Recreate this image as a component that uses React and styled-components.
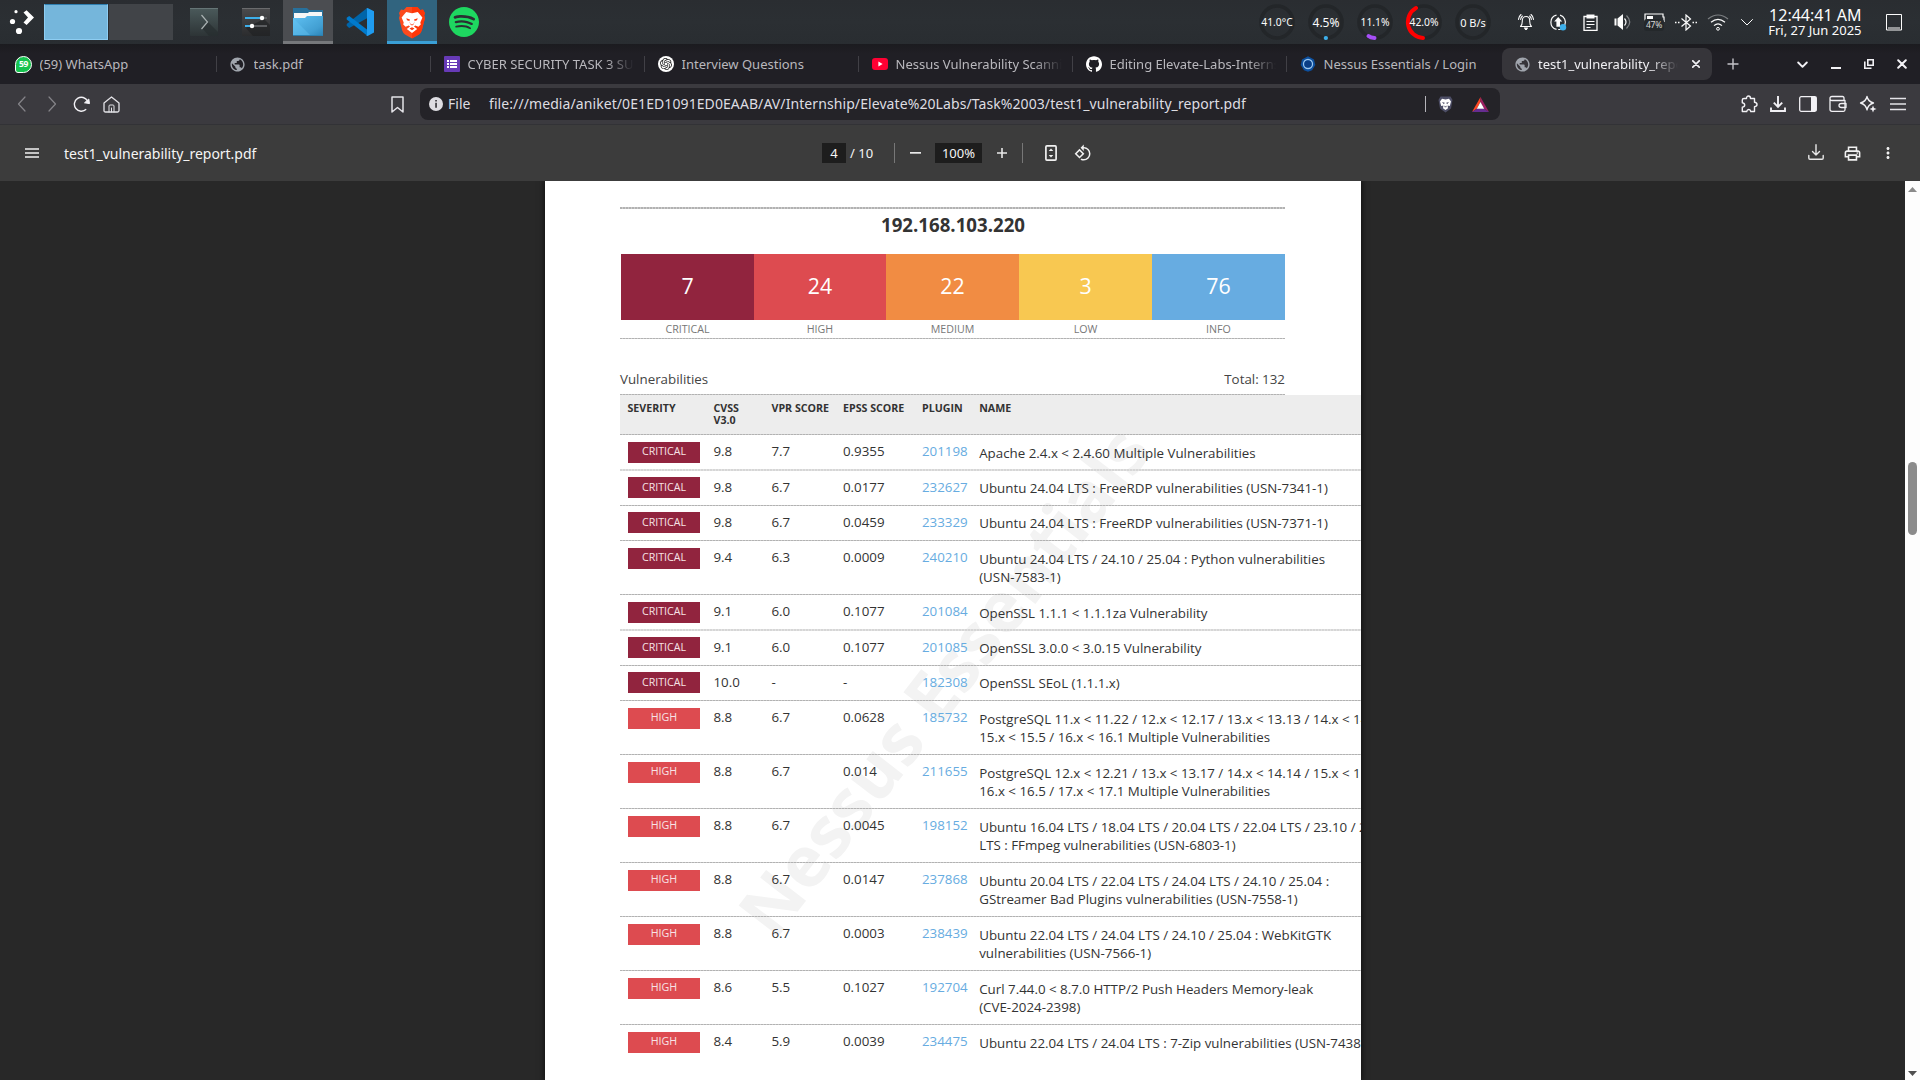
import React from 'react';
import styled, { createGlobalStyle, css } from 'styled-components';
import { SiSpotify, SiOpenai, SiGithub } from 'react-icons/si';
import {
  MdPublic,
  MdOutlinePrint,
  MdMoreVert,
  MdRotate90DegreesCcw,
} from 'react-icons/md';

const ui = '"Noto Sans", "Open Sans", sans-serif';
const doc = '"Open Sans", "Noto Sans", sans-serif';

const Global = createGlobalStyle`
  * { box-sizing: border-box; }
  html, body { margin: 0; padding: 0; background: #282828; }
  body { width: 1920px; height: 1080px; overflow: hidden; font-family: ${ui}; }
  svg { display: block; flex: none; }
`;

const Screen = styled.div`
  width: 1920px;
  height: 1080px;
  display: flex;
  flex-direction: column;
  overflow: hidden;
`;

/* ---------- desktop panel ---------- */

const Panel = styled.header`
  height: 44px;
  flex: none;
  display: flex;
  align-items: center;
  justify-content: space-between;
  padding: 0 10px 0 0;
  background: linear-gradient(#2a2d31, #2b2f33 50%, #292d31);
  color: #fcfcfc;
`;

const PanelGroup = styled.div`
  display: flex;
  align-items: center;
  height: 44px;
`;

const Launcher = styled.div`
  width: 44px;
  display: flex;
  justify-content: center;
`;

const Pager = styled.div`
  display: flex;
  gap: 1px;
  margin-right: 6px;
`;

const Desktop = styled.div`
  width: 64px;
  height: 36px;
  background: ${(p) => (p.$active ? '#75b6db' : '#414448')};
  ${(p) =>
    p.$active &&
    css`
      border: 1px solid #8dcdf2;
      border-top-color: #2f7fb0;
    `}
`;

const Tasks = styled.div`
  display: flex;
  gap: 2px;
`;

const Task = styled.div`
  width: 50px;
  height: 44px;
  display: flex;
  align-items: center;
  justify-content: center;
  background: ${(p) => p.$bg || 'transparent'};
  border-bottom: 3px solid ${(p) => p.$line || 'transparent'};
  padding-top: 3px;
`;

const Gauge = styled.div`
  width: 49px;
  height: 44px;
  display: grid;
  place-items: center;
  font-size: ${(p) => p.$size}px;
  white-space: nowrap;

  > * {
    grid-area: 1 / 1;
  }
`;

const TrayCell = styled.div`
  width: ${(p) => p.$w || 32}px;
  height: 44px;
  display: flex;
  align-items: center;
  justify-content: center;
`;

const Clock = styled.div`
  width: 102px;
  display: flex;
  flex-direction: column;
  align-items: flex-end;
  font-size: 16px;
  line-height: 17px;
  white-space: nowrap;
  margin: 0 16.5px 0 -0.5px;
`;

const DateLine = styled.span`
  font-size: 13px;
  line-height: 13px;
`;

/* ---------- tabs ---------- */

const TabStrip = styled.nav`
  height: 40px;
  flex: none;
  display: flex;
  align-items: center;
  padding-left: 3px;
  background: linear-gradient(#1b1b1f, #201f25 10px);
`;

const Tab = styled.div`
  width: 214px;
  flex: none;
  height: 40px;
  display: flex;
  align-items: center;
  padding-left: 12px;
  gap: 7.5px;
  font-size: 13px;
  color: #b9b8bd;

  &::after {
    content: '';
    width: 1px;
    height: 16px;
    margin-left: auto;
    background: ${(p) => (p.$last ? 'transparent' : '#414046')};
    flex: none;
  }
`;

const ActiveTab = styled.div`
  width: 210px;
  height: 32px;
  margin-left: 1px;
  border-radius: 8px;
  background: #36353a;
  display: flex;
  align-items: center;
  padding: 0 10px 0 12px;
  gap: 7px;
  font-size: 13px;
  color: #f0eff3;
`;

const TabLabel = styled.span`
  white-space: nowrap;
  overflow: hidden;
  width: ${(p) => p.$w || 166}px;
  line-height: 20px;
  padding-bottom: 1px;
  flex: none;
  ${(p) =>
    p.$fade &&
    css`
      mask-image: linear-gradient(90deg, #000 calc(100% - 28px), transparent);
    `}
`;

const TabIcon = styled.span`
  width: 17px;
  height: 16px;
  display: flex;
  align-items: center;
  justify-content: center;
  flex: none;
`;

const TabClose = styled.span`
  margin-left: 7px;
`;

const WindowButtons = styled.div`
  display: flex;
  align-items: center;
  margin-left: auto;
`;

const WindowButton = styled.div`
  width: ${(p) => p.$w || 33}px;
  height: 40px;
  display: flex;
  align-items: center;
  justify-content: center;
`;

const NewTab = styled.div`
  width: 42px;
  display: flex;
  justify-content: center;
`;

/* ---------- address bar ---------- */

const NavBar = styled.div`
  height: 41px;
  flex: none;
  display: flex;
  align-items: center;
  background: #3b3a3f;
  border-bottom: 1px solid #323236;
  padding: 0 7px 0 7px;
`;

const NavCell = styled.div`
  width: ${(p) => p.$w || 30}px;
  display: flex;
  align-items: center;
  justify-content: center;
  flex: none;
`;

const Spacer = styled.div`
  width: ${(p) => p.$w}px;
  flex: none;
`;

const AddressBar = styled.div`
  width: 1080px;
  height: 32px;
  border-radius: 8px;
  background: #242328;
  display: flex;
  align-items: center;
  padding: 0 5px 0 9px;
  color: #dedde2;
  font-size: 14px;
`;

const Scheme = styled.span`
  width: 41px;
  margin-left: 5px;
  padding-bottom: 2px;
  color: #dedde2;
`;

const Url = styled.span`
  flex: 1;
  white-space: nowrap;
  padding-bottom: 2px;
  letter-spacing: 0.085px;
`;

const Divider = styled.span`
  width: 1px;
  height: ${(p) => p.$h}px;
  background: ${(p) => p.$color};
  flex: none;
`;

const NavRight = styled.div`
  display: flex;
  align-items: center;
  margin-left: auto;
`;

/* ---------- pdf toolbar ---------- */

const PdfBar = styled.div`
  height: 56px;
  flex: none;
  display: grid;
  grid-template-columns: 822px 300px 1fr;
  align-items: center;
  background: #3c3c3c;
  color: #f5f5f5;
  position: relative;
  z-index: 2;
`;

const PdfTitle = styled.div`
  display: flex;
  align-items: center;
  padding-left: 25px;
  gap: 25px;
  font-size: 14px;
  letter-spacing: -0.03px;
`;

const PdfControls = styled.div`
  display: flex;
  align-items: center;
  font-size: 13px;
  white-space: nowrap;

  > * {
    flex: none;
  }
`;

const Field = styled.span`
  width: ${(p) => p.$w}px;
  height: 20px;
  line-height: 20px;
  text-align: center;
  background: #1d1d1d;
`;

const PageTotal = styled.span`
  width: 48px;
  padding-left: 4px;
`;

const ControlCell = styled.span`
  width: ${(p) => p.$w}px;
  display: flex;
  justify-content: center;
`;

const PdfActions = styled.div`
  display: flex;
  justify-content: flex-end;
  padding-right: 14px;
`;

/* ---------- document ---------- */

const Viewer = styled.main`
  flex: 1;
  min-height: 0;
  display: flex;
  background: #282828;
`;

const Canvas = styled.div`
  width: 1905px;
  display: flex;
  padding-left: 545px;
`;

const Page = styled.article`
  width: 816px;
  height: 899px;
  background: #fff;
  box-shadow: 0 0 6px 1px rgba(0, 0, 0, 0.6);
  position: relative;
  overflow: hidden;
  padding: 26px 0 0 75px;
  font-family: ${doc};
  color: #333;
`;

const dotted = css`
  background-image: repeating-linear-gradient(90deg, #b2b2b2 0 2px, #cbcbcb 2px 3px);
`;

const Rule = styled.div`
  width: 665px;
  height: ${(p) => p.$h || 1}px;
  ${dotted}
`;

const Host = styled.h1`
  width: 666px;
  margin: 0;
  height: 45px;
  line-height: 32px;
  font-size: 18.67px;
  font-weight: 700;
  text-align: center;
  color: #333;
`;

const Tiles = styled.div`
  display: grid;
  grid-template-columns: 133px 132px 133px 133px 133px;
  width: 665px;
  padding-left: 1px;
`;

const Tile = styled.div`
  height: 66px;
  line-height: 63px;
  text-align: center;
  font-size: 21.33px;
  font-weight: 400;
  color: #fff;
  background: ${(p) => p.$bg};
`;

const TileLabel = styled.div`
  height: 18px;
  line-height: 18px;
  font-size: 10.67px;
  text-align: center;
  color: #777;
`;

const Caption = styled.div`
  width: 665px;
  height: 55px;
  padding-top: 31px;
  line-height: 18px;
  font-size: 13.33px;
  display: flex;
  justify-content: space-between;
  color: #444;
`;

const columns = css`
  display: grid;
  grid-template-columns: 86px 58px 71.5px 79px 57.2px 420px;
  padding-left: 7.5px;
  width: 780px;
`;

const HeadRow = styled.div`
  ${columns}
  height: 39px;
  padding-top: 7px;
  font-size: 10.67px;
  line-height: 12px;
  font-weight: 700;
  color: #333;
  background: #ededed;
  position: relative;
  z-index: 1;
`;

const Row = styled.div`
  ${columns}
  height: ${(p) => p.$h}px;
  position: relative;
  font-size: 13.33px;
  line-height: 18px;
  align-items: start;
  ${dotted}
  ${(p) =>
    p.$soft &&
    css`
      background-image: repeating-linear-gradient(90deg, #d6d6d6 0 2px, #e2e2e2 2px 3px);
    `}
  background-size: 100% ${(p) => (p.$soft ? 2 : 1)}px;
  background-repeat: no-repeat;
`;

const Badge = styled.span`
  width: 72px;
  height: 21px;
  margin-top: ${(p) => 8 - p.$up}px;
  margin-left: 0.5px;
  line-height: ${(p) => (p.$low ? 20 : 18)}px;
  font-size: 10.67px;
  text-align: center;
  color: #f7e3e6;
  background: ${(p) => (p.$level === 'CRITICAL' ? '#91243e' : '#dd4b50')};
`;

const Value = styled.span`
  padding-top: ${(p) => 8 + p.$down}px;
`;

const PluginLink = styled(Value)`
  color: #67ace1;
`;

const Name = styled.span`
  padding-top: ${(p) => 10 - p.$up}px;
  white-space: pre;
`;

const Watermark = styled.div`
  position: absolute;
  left: 230px;
  top: 694.5px;
  font-size: 70.67px;
  line-height: 76px;
  font-weight: 700;
  white-space: nowrap;
  color: #f3f3f3;
  transform-origin: 0 65.4px;
  transform: rotate(-52.3deg);
`;

const Scrollbar = styled.aside`
  width: 15px;
  background: #fdfdfd;
  display: flex;
  flex-direction: column;
  align-items: center;
  padding: 6px 0 4px;
`;

const Thumb = styled.div`
  width: 9px;
  height: 73px;
  border-radius: 5px;
  background: #8b8b8b;
  margin: 270px 0 auto;
`;

/* ---------- drawings ---------- */

const Stroke = ({ size = 16, w = 1, color = '#fcfcfc', box = 16, children }) => (
  <svg
    width={size}
    height={size}
    viewBox={`0 0 ${box} ${box}`}
    fill="none"
    stroke={color}
    strokeWidth={w}
    strokeLinejoin="round"
    strokeLinecap="round"
  >
    {children}
  </svg>
);

const PlasmaLogo = () => (
  <svg width="28" height="28" viewBox="0 0 28 28" fill="#fff">
    <circle cx="8" cy="3.7" r="1.6" />
    <circle cx="4.5" cy="13.5" r="2.6" />
    <circle cx="11" cy="23" r="3.1" />
    <path d="M15.5 4.4 18.6 2.2 26 9.5 18.6 17 15.5 14.6 20 9.5z" />
  </svg>
);

const Konsole = () => (
  <svg width="28" height="28" viewBox="0 0 28 28">
    <defs>
      <linearGradient id="kon" x1="0" y1="0" x2="0" y2="1">
        <stop offset="0" stopColor="#4b5a5b" />
        <stop offset="1" stopColor="#2d3436" />
      </linearGradient>
    </defs>
    <rect width="28" height="28" rx="1" fill="url(#kon)" />
    <path d="M12 20 18 14 28 24V28H19z" fill="#252b2d" opacity=".6" />
    <rect y="0" width="28" height="1" fill="#667576" />
    <path d="M11.5 7 17.5 14 11.5 21" fill="none" stroke="#aab2b3" strokeWidth="1.2" />
  </svg>
);

const SettingsApp = () => (
  <svg width="28" height="28" viewBox="0 0 28 28">
    <defs>
      <linearGradient id="set" x1="0" y1="0" x2="0" y2="1">
        <stop offset="0" stopColor="#4b4b4d" />
        <stop offset="1" stopColor="#2b2c2e" />
      </linearGradient>
    </defs>
    <rect width="28" height="28" rx="1" fill="url(#set)" />
    <rect width="28" height="1" fill="#6a6b6d" />
    <path d="M4 20 22 11 28 17V28H11z" fill="#1e1f21" opacity=".6" />
    <path d="M3 10H20" stroke="#3daee9" strokeWidth="2" />
    <path d="M20 10H25M10 18H25" stroke="#5b5d60" strokeWidth="2" />
    <path d="M3 18H10" stroke="#3daee9" strokeWidth="2" />
    <circle cx="20" cy="10" r="2.2" fill="#fff" />
    <circle cx="10" cy="18" r="2.2" fill="#fff" />
  </svg>
);

const FolderApp = () => (
  <svg width="30" height="28" viewBox="0 0 30 28">
    <defs>
      <linearGradient id="fol" x1="0" y1="0" x2="1" y2="1">
        <stop offset="0" stopColor="#5fc1f3" />
        <stop offset=".7" stopColor="#429fd2" />
        <stop offset="1" stopColor="#2b83b6" />
      </linearGradient>
    </defs>
    <path d="M0 0H14L16 2H30V20H0z" fill="#28709b" />
    <path d="M1 5H15L16 4H29V12H1z" fill="#f6f6f6" />
    <path d="M0 10H12L14 8H30V28H0z" fill="url(#fol)" />
    <path d="M0 10 18 28H0z" fill="#6ccaf8" opacity=".35" />
    <rect y="27" width="30" height="1" fill="#2b7fae" />
  </svg>
);

const VsCode = () => (
  <svg width="28" height="28" viewBox="0 0 28 28">
    <path d="M20.5.5 27 3.4V7L3.2 20 .7 17.8V16z" fill="#0065a9" />
    <path d="M.7 9.8 3.2 8 21 21.6V27.5L.7 11.6z" fill="#007acc" />
    <path d="M20.5.5 21.6.1 28 3.2V24.6L21.6 28 20.3 27.5 21 26.5V1.5z" fill="#1f9cf0" />
  </svg>
);

const BraveShield = () => (
  <svg width="28" height="33" viewBox="0 0 28 33">
    <path
      d="M8.5 1H19.5L22.2 4 25 3.6 27 7 26.2 9.5 27 12 23.8 24.5Q23 27 21 28.4L14 32.5 7 28.4Q5 27 4.2 24.5L1 12 1.8 9.5 1 7 3 3.6 5.8 4z"
      fill="#fb4a1d"
    />
    <path d="M14 1H19.5L22.2 4 25 3.6 27 7 26.2 9.5 27 12 23.8 24.5Q23 27 21 28.4L14 32.5z" fill="#ff2f00" opacity=".7" />
    <path
      d="M8.2 6 14 7.2 19.8 6 24.4 11.4 22.3 16.4 22.8 18.4 20.4 20.8 17.2 19.6 16 20.6 19.2 23 14 27 8.8 23 12 20.6 10.8 19.6 7.6 20.8 5.2 18.4 5.7 16.4 3.6 11.4z"
      fill="#fff"
    />
    <path d="M8.3 12.3 12 13.4 11.3 14.9 9 14.3zM19.7 12.3 16 13.4 16.7 14.9 19 14.3zM11.3 15 12.2 18.3 14 19.6 15.8 18.3 16.7 15 15.5 18 14 18.5 12.5 18zM11.5 22.4 14 21.2 16.5 22.4 14 24.2z" fill="#fb3a10" />
  </svg>
);

const Arc = ({ color, d }) => (
  <svg width="38" height="38" viewBox="0 0 38 38" fill="none">
    <circle cx="19" cy="19" r="16" stroke="#232629" strokeWidth="3.6" />
    {d && <path d={d} stroke={color} strokeWidth="4" strokeLinecap="round" />}
  </svg>
);

const BellIcon = () => (
  <Stroke w={1.1}>
    <path d="M2.5 12.5C4.5 11 4.3 9.5 4.3 6.5 4.3 4 6 2.5 8 2.5S11.7 4 11.7 6.5C11.7 9.5 11.5 11 13.5 12.5z" />
    <path d="M3 .5C1.5 1.8.7 3.6.5 5.4M13 .5c1.5 1.3 2.3 3.1 2.5 4.9M4.4 2C3.2 3 2.7 4 2.6 5.5M11.6 2c1.2 1 1.7 2 1.8 3.5" />
    <path d="M6.5 14h3l-1.5 1.8z" fill="#fcfcfc" />
  </Stroke>
);

const UpdateIcon = () => (
  <svg width="17" height="17" viewBox="0 0 17 17" fill="none">
    <path d="M6.5 1.1A7.3 7.3 0 0 0 6.5 15.3M10 1.1A7.3 7.3 0 0 1 14.8 11M8.2 15.5H10.5" stroke="#fcfcfc" strokeWidth="1.2" />
    <path d="M8.2 3 12.2 7.5H10V12.8H6.4V7.5H4.2z" fill="#fcfcfc" />
    <circle cx="13" cy="13.3" r="3.2" fill="#3daee9" />
  </svg>
);

const ClipboardIcon = () => (
  <svg width="15" height="17" viewBox="0 0 15 17" fill="none">
    <path d="M1 2.5H14V16.4H1z" stroke="#fcfcfc" strokeWidth="1.3" />
    <rect x="3.5" y="0.5" width="8" height="4" fill="#fcfcfc" />
    <path d="M3.5 7.5H11.5M3.5 10.5H11.5M3.5 13.5H7.5" stroke="#fcfcfc" />
  </svg>
);

const VolumeIcon = () => (
  <svg width="17" height="16" viewBox="0 0 17 16" fill="none">
    <path d="M0.5 4.5H2.5V11.5H0.5z" fill="#fcfcfc" />
    <path d="M3.5 4.5 9 0V16L3.5 11.5z" fill="#fcfcfc" />
    <path d="M10.5 4.5Q13.5 8 10.5 11.5" stroke="#fcfcfc" strokeWidth="1.2" />
    <path d="M12.5 1.5Q19 8 12.5 14.5" stroke="#7c7f82" strokeWidth="1.2" />
  </svg>
);

const BatteryBox = styled.div`
  display: grid;
  justify-items: center;
  width: 21px;
  height: 18px;
`;

const BatteryText = styled.span`
  grid-area: 1 / 1;
  margin-top: 6px;
  width: 20px;
  height: 12px;
  line-height: 11px;
  font-size: 8.5px;
  letter-spacing: -0.2px;
  text-align: center;
  background: #24282b;
  border-radius: 3px;
  color: #d8d8d8;
`;

const BatteryShape = styled.svg`
  grid-area: 1 / 1;
`;

const Battery = () => (
  <BatteryBox>
    <BatteryShape width="21" height="14" viewBox="0 0 21 14" fill="none">
      <path d="M1 11V1H19V4H20V9" stroke="#fcfcfc" strokeWidth="1.2" />
      <rect x="3" y="3" width="6" height="3" fill="#fcfcfc" />
    </BatteryShape>
    <BatteryText>47%</BatteryText>
  </BatteryBox>
);

const BluetoothIcon = () => (
  <svg width="22" height="17" viewBox="0 0 22 17" fill="none">
    <path d="M6.5 4.5 15.5 12 11 16V1L15.5 5 6.5 12.5" stroke="#fcfcfc" strokeWidth="1.2" />
    <path d="M0 8.5H1.5M3 8.5H4.5M17.5 8.5H19M20.5 8.5H22" stroke="#fcfcfc" strokeWidth="1.5" />
  </svg>
);

const WifiIcon = () => (
  <svg width="22" height="17" viewBox="0 0 22 17" fill="none">
    <path d="M1 5Q11-3 21 5" stroke="#7c7f82" strokeWidth="1.2" />
    <path d="M4 8.3Q11 2.5 18 8.3M7 11.6Q11 8.2 15 11.6" stroke="#fcfcfc" strokeWidth="1.2" />
    <circle cx="11" cy="14.8" r="1.4" stroke="#fcfcfc" />
  </svg>
);

const DesktopIcon = () => (
  <svg width="16" height="17" viewBox="0 0 16 17" fill="none" stroke="#fcfcfc">
    <path d="M.5.5H15.5V16H.5zM2 14H14" />
  </svg>
);

const WhatsAppIcon = styled.span`
  width: 17px;
  height: 17px;
  border: 1.5px solid #fff;
  border-radius: 50% 50% 50% 3px;
  background: #16c34f;
  color: #fff;
  font-size: 8.5px;
  line-height: 14px;
  font-weight: 700;
  text-align: center;
  letter-spacing: -0.3px;
`;

const FormsIcon = () => (
  <svg width="16" height="16" viewBox="0 0 16 16">
    <rect width="16" height="16" rx="1" fill="#673ab7" />
    <path d="M3 4h2v2H3zM6 4h7v2H6zM3 7h2v2H3zM6 7h7v2H6zM3 10h2v2H3zM6 10h7v2H6z" fill="#fff" />
  </svg>
);

const GptDisc = styled.span`
  width: 16px;
  height: 16px;
  border-radius: 50%;
  background: #fff;
  display: grid;
  place-items: center;
`;

const YoutubeIcon = () => (
  <svg width="16" height="12" viewBox="0 0 16 12">
    <rect width="16" height="12" rx="3" fill="#ff0033" />
    <path d="M6.4 3.4 10.6 6 6.4 8.6z" fill="#fff" />
  </svg>
);

const NessusIcon = () => (
  <svg width="16" height="16" viewBox="0 0 16 16" fill="none">
    <path d="M8 .3 14 3.5 15.3 9 12 14.3 8 15.7 4 14.3.7 9 2 3.5z" fill="#0c4f9e" />
    <circle cx="8" cy="8" r="4.5" stroke="#9cc6ee" strokeWidth="1.3" />
    <circle cx="8" cy="8" r="3.5" fill="#0a3d84" />
  </svg>
);

const LionShield = () => (
  <svg width="15" height="17" viewBox="0 0 15 17">
    <path d="M2.5 .5H12.5L14.5 4 13 12.5 7.5 16.5 2 12.5.5 4z" fill="#4d4e66" />
    <path d="M4 2.8 7.5 3.6 11 2.8 13 5.6 11.8 10 9.6 9.6 10 12.3 7.5 14 5 12.3 5.4 9.6 3.2 10 2 5.6z" fill="#fff" />
    <path d="M4 6 6.8 6.8 5.9 8.2zM11 6 8.2 6.8 9.1 8.2zM6.3 9.5 7.5 10.5 8.7 9.5 8.3 11.2H6.7z" fill="#4d4e66" />
  </svg>
);

const BatTriangle = () => (
  <svg width="17" height="15" viewBox="0 0 17 15">
    <path d="M8.5 0V5L5 11.5 0 15z" fill="#ff4724" />
    <path d="M8.5 0 17 15 12 11.5 8.5 5z" fill="#9e1f63" />
    <path d="M0 15 5 11.5H12L17 15z" fill="#662d91" />
    <path d="M8.5 5 12.2 11.7H4.8z" fill="#fff" />
  </svg>
);

const Reload = () => (
  <svg width="17" height="17" viewBox="0 0 17 17" fill="none">
    <path d="M13.2 13.3A7 7 0 1 1 14.6 5" stroke="#f2f1f5" strokeWidth="1.4" />
    <path d="M11.5 6.8 16.5 7.6 15.8 3z" fill="#f2f1f5" stroke="#f2f1f5" strokeLinejoin="round" />
  </svg>
);

const Home = () => (
  <Stroke size={17} color="#e4e3e8" w={1.3} box={17}>
    <path d="M1 7 8.5 1 16 7V14.5Q16 16 14.5 16H2.5Q1 16 1 14.5z" />
    <path d="M6 16V10Q6 9 7 9H10Q11 9 11 10V16M8.5 12V16" strokeWidth="1" />
  </Stroke>
);

const Puzzle = () => (
  <Stroke size={18} box={18} color="#f2f1f5" w={1.4}>
    <path d="M4 3.5H6.5C6.5 1.8 7.3 1 8.5 1S10.5 1.8 10.5 3.5H14.5V7.3C16.2 7.5 17 8.3 17 9.5S16.2 11.5 14.5 11.7V16.5H10.8C10.5 15 9.8 14.5 8.8 14.5S7 15 6.7 16.5H2.3V12.2C4 12 4.7 11 4.7 10S4 8 2.3 7.7V5Q2.3 3.5 4 3.5z" />
  </Stroke>
);

const DownloadBold = () => (
  <svg width="16" height="16" viewBox="0 0 16 16" fill="none" stroke="#f2f1f5" strokeWidth="1.9">
    <path d="M8 0V10.5M3.8 6.6 8 10.8 12.2 6.6M1 11.5V15H15V11.5" />
  </svg>
);

const Sidebar = () => (
  <svg width="18" height="16" viewBox="0 0 18 16">
    <rect x=".7" y=".7" width="16.6" height="14.6" rx="1.5" fill="none" stroke="#f2f1f5" strokeWidth="1.3" />
    <rect x="12" y="1" width="5.3" height="14" fill="#f2f1f5" />
  </svg>
);

const Wallet = () => (
  <Stroke size={18} box={18} color="#f2f1f5" w={1.3}>
    <path d="M15 5.5V3Q15 1.5 13.5 1.5H3Q1 1.5 1 3.3V14.5Q1 16.3 3 16.3H14.5Q16 16.3 16 14.8V5.5H3Q1 5.5 1 3.5" />
    <path d="M17 8.5H12.5Q10 8.5 10 10.5T12.5 12.5H17z" />
  </Stroke>
);

const Sparkle = () => (
  <svg width="18" height="18" viewBox="0 0 18 18" fill="none">
    <path d="M8 1.5Q9 6.5 14.5 8 9 9.5 8 15 7 9.5 1.5 8 7 6.5 8 1.5z" stroke="#f2f1f5" strokeWidth="1.3" strokeLinejoin="round" />
    <path d="M14 10.5 15 13 17.5 14 15 15 14 17.5 13 15 10.5 14 13 13z" fill="#f2f1f5" />
  </svg>
);

const FitPage = () => (
  <svg width="14" height="18" viewBox="0 0 14 18" fill="none">
    <rect x="1.9" y="1.9" width="10.2" height="14.2" rx="1" stroke="#f1f1f1" strokeWidth="1.7" />
    <path d="M7 4.5 9.3 7H4.7zM7 13.5 4.7 11H9.3z" fill="#f1f1f1" />
  </svg>
);

/* ---------- data ---------- */

const gauges = [
  { text: '41.0°C', size: 10.3 },
  { text: '4.5%', size: 12, color: '#3daee9', d: 'M18.7 35H19' },
  { text: '11.1%', size: 10.3, color: '#a64ff7', d: 'M18.5 35Q14.5 34.8 12.5 33' },
  { text: '42.0%', size: 10.3, color: '#ff0000', d: 'M18 35A16 16 0 0 1 11 5.1' },
  { text: '0 B/s', size: 11 },
];

const tabs = [
  { label: '(59) WhatsApp', icon: <WhatsAppIcon>59</WhatsAppIcon> },
  { label: 'task.pdf', icon: <MdPublic size={17} color="#a0a5ad" /> },
  { label: 'CYBER SECURITY TASK 3 SUB', icon: <FormsIcon />, fade: true },
  {
    label: 'Interview Questions',
    icon: (
      <GptDisc>
        <SiOpenai size={12} color="#222" />
      </GptDisc>
    ),
  },
  { label: 'Nessus Vulnerability Scanni', icon: <YoutubeIcon />, fade: true },
  { label: 'Editing Elevate-Labs-Interns', icon: <SiGithub size={16} color="#fff" />, fade: true },
  { label: 'Nessus Essentials / Login', icon: <NessusIcon /> },
];

const severities = [
  { count: '7', label: 'CRITICAL', bg: '#91243e' },
  { count: '24', label: 'HIGH', bg: '#dd4b50' },
  { count: '22', label: 'MEDIUM', bg: '#f18c43' },
  { count: '3', label: 'LOW', bg: '#f8c851' },
  { count: '76', label: 'INFO', bg: '#67ace1' },
];

const rows = [
  { h: 35, level: 'CRITICAL', cvss: '9.8', vpr: '7.7', epss: '0.9355', plugin: '201198', name: 'Apache 2.4.x < 2.4.60 Multiple Vulnerabilities' },
  { h: 36, soft: true, low: true, down: 1, level: 'CRITICAL', cvss: '9.8', vpr: '6.7', epss: '0.0177', plugin: '232627', name: 'Ubuntu 24.04 LTS : FreeRDP vulnerabilities (USN-7341-1)' },
  { h: 35, up: 1, low: true, level: 'CRITICAL', cvss: '9.8', vpr: '6.7', epss: '0.0459', plugin: '233329', name: 'Ubuntu 24.04 LTS : FreeRDP vulnerabilities (USN-7371-1)' },
  { h: 54, level: 'CRITICAL', cvss: '9.4', vpr: '6.3', epss: '0.0009', plugin: '240210', name: 'Ubuntu 24.04 LTS / 24.10 / 25.04 : Python vulnerabilities\n(USN-7583-1)' },
  { h: 35, level: 'CRITICAL', cvss: '9.1', vpr: '6.0', epss: '0.1077', plugin: '201084', name: 'OpenSSL 1.1.1 < 1.1.1za Vulnerability' },
  { h: 36, soft: true, low: true, down: 1, level: 'CRITICAL', cvss: '9.1', vpr: '6.0', epss: '0.1077', plugin: '201085', name: 'OpenSSL 3.0.0 < 3.0.15 Vulnerability' },
  { h: 35, up: 1, low: true, level: 'CRITICAL', cvss: '10.0', vpr: '-', epss: '-', plugin: '182308', name: 'OpenSSL SEoL (1.1.1.x)' },
  { h: 54, level: 'HIGH', cvss: '8.8', vpr: '6.7', epss: '0.0628', plugin: '185732', name: 'PostgreSQL 11.x < 11.22 / 12.x < 12.17 / 13.x < 13.13 / 14.x < 14.10 /\n15.x < 15.5 / 16.x < 16.1 Multiple Vulnerabilities' },
  { h: 54, level: 'HIGH', cvss: '8.8', vpr: '6.7', epss: '0.014', plugin: '211655', name: 'PostgreSQL 12.x < 12.21 / 13.x < 13.17 / 14.x < 14.14 / 15.x < 15.9 /\n16.x < 16.5 / 17.x < 17.1 Multiple Vulnerabilities' },
  { h: 54, level: 'HIGH', cvss: '8.8', vpr: '6.7', epss: '0.0045', plugin: '198152', name: 'Ubuntu 16.04 LTS / 18.04 LTS / 20.04 LTS / 22.04 LTS / 23.10 / 24.04\nLTS : FFmpeg vulnerabilities (USN-6803-1)' },
  { h: 54, level: 'HIGH', cvss: '8.8', vpr: '6.7', epss: '0.0147', plugin: '237868', name: 'Ubuntu 20.04 LTS / 22.04 LTS / 24.04 LTS / 24.10 / 25.04 :\nGStreamer Bad Plugins vulnerabilities (USN-7558-1)' },
  { h: 54, level: 'HIGH', cvss: '8.8', vpr: '6.7', epss: '0.0003', plugin: '238439', name: 'Ubuntu 22.04 LTS / 24.04 LTS / 24.10 / 25.04 : WebKitGTK\nvulnerabilities (USN-7566-1)' },
  { h: 54, level: 'HIGH', cvss: '8.6', vpr: '5.5', epss: '0.1027', plugin: '192704', name: 'Curl 7.44.0 < 8.7.0 HTTP/2 Push Headers Memory-leak\n(CVE-2024-2398)' },
  { h: 56, level: 'HIGH', cvss: '8.4', vpr: '5.9', epss: '0.0039', plugin: '234475', name: 'Ubuntu 22.04 LTS / 24.04 LTS : 7-Zip vulnerabilities (USN-7438-1)' },
];

/* ---------- sections ---------- */

const DesktopPanel = () => (
  <Panel>
    <PanelGroup>
      <Launcher>
        <PlasmaLogo />
      </Launcher>
      <Pager>
        <Desktop $active />
        <Desktop />
      </Pager>
      <Tasks>
        <Task><Konsole /></Task>
        <Task><SettingsApp /></Task>
        <Task $bg="#4b4d51" $line="#76787b"><FolderApp /></Task>
        <Task><VsCode /></Task>
        <Task $bg="#31647f" $line="#3a9fd6"><BraveShield /></Task>
        <Task><SiSpotify size={30} color="#1ed760" /></Task>
      </Tasks>
    </PanelGroup>
    <PanelGroup>
      {gauges.map((g) => (
        <Gauge key={g.text} $size={g.size}>
          <Arc color={g.color} d={g.d} />
          <span>{g.text}</span>
        </Gauge>
      ))}
      <Spacer $w={12.5} />
      <TrayCell><BellIcon /></TrayCell>
      <TrayCell><UpdateIcon /></TrayCell>
      <TrayCell><ClipboardIcon /></TrayCell>
      <TrayCell><VolumeIcon /></TrayCell>
      <TrayCell><Battery /></TrayCell>
      <TrayCell><BluetoothIcon /></TrayCell>
      <TrayCell><WifiIcon /></TrayCell>
      <TrayCell $w={26}>
        <Stroke size={12} box={12}><path d="M.5 3.5 6 9 11.5 3.5" /></Stroke>
      </TrayCell>
      <Clock>
        <span>12:44:41 AM</span>
        <DateLine>Fri, 27 Jun 2025</DateLine>
      </Clock>
      <TrayCell><DesktopIcon /></TrayCell>
    </PanelGroup>
  </Panel>
);

const Tabs = () => (
  <TabStrip>
    {tabs.map((t, i) => (
      <Tab key={t.label} $last={i === tabs.length - 1}>
        <TabIcon>{t.icon}</TabIcon>
        <TabLabel $fade={t.fade}>{t.label}</TabLabel>
      </Tab>
    ))}
    <ActiveTab>
      <TabIcon><MdPublic size={17} color="#a0a5ad" /></TabIcon>
      <TabLabel $w={140} $fade>test1_vulnerability_repor</TabLabel>
      <TabClose>
        <Stroke size={8} box={8} w={1.7} color="#f2f1f5"><path d="M.8.8 7.2 7.2M7.2.8.8 7.2" /></Stroke>
      </TabClose>
    </ActiveTab>
    <NewTab>
      <Stroke size={12} box={12} w={1.4} color="#c4c3c9"><path d="M6 1V11M1 6H11" /></Stroke>
    </NewTab>
    <WindowButtons>
      <WindowButton $w={34}>
        <Stroke size={11} box={11} w={1.9} color="#f2f1f5"><path d="M1.2 3.5 5.5 7.8 9.8 3.5" /></Stroke>
      </WindowButton>
      <WindowButton>
        <svg width="10" height="12" viewBox="0 0 10 12"><rect y="9" width="10" height="2" fill="#f2f1f5" /></svg>
      </WindowButton>
      <WindowButton>
        <svg width="10" height="10" viewBox="0 0 10 10" fill="none" stroke="#f2f1f5" strokeWidth="1.6">
          <path d="M3.8.8H9.2V6.2H3.8zM.8 2.5V9.2H7.5" />
        </svg>
      </WindowButton>
      <WindowButton>
        <Stroke size={10} box={10} w={2} color="#f2f1f5"><path d="M1.2 1.2 8.8 8.8M8.8 1.2 1.2 8.8" /></Stroke>
      </WindowButton>
      <Spacer $w={1.5} />
    </WindowButtons>
  </TabStrip>
);

const AddressRow = () => (
  <NavBar>
    <NavCell>
      <Stroke color="#858489" w={1.2}><path d="M11 1 4.5 8 11 15" /></Stroke>
    </NavCell>
    <NavCell>
      <Stroke color="#858489" w={1.2}><path d="M5 1 11.5 8 5 15" /></Stroke>
    </NavCell>
    <NavCell $w={29}><Reload /></NavCell>
    <NavCell><Home /></NavCell>
    <Spacer $w={256} />
    <NavCell>
      <svg width="13" height="17" viewBox="0 0 13 17" fill="none" stroke="#e4e3e8" strokeWidth="1.5" strokeLinejoin="round">
        <path d="M1 1H12V16L6.5 11.5 1 16z" />
      </svg>
    </NavCell>
    <Spacer $w={8} />
    <AddressBar>
      <svg width="14" height="14" viewBox="0 0 14 14">
        <circle cx="7" cy="7" r="7" fill="#dedde2" />
        <path d="M6.2 3h1.7v1.6H6.2zM6.2 5.8h1.7v5H6.2z" fill="#3a393e" />
      </svg>
      <Scheme>File</Scheme>
      <Url>file:///media/aniket/0E1ED1091ED0EAAB/AV/Internship/Elevate%20Labs/Task%2003/test1_vulnerability_report.pdf</Url>
      <Divider $h={16} $color="#b5b4ba" />
      <NavCell $w={39}><LionShield /></NavCell>
      <NavCell><BatTriangle /></NavCell>
    </AddressBar>
    <NavRight>
      <NavCell $w={28}><Puzzle /></NavCell>
      <NavCell><DownloadBold /></NavCell>
      <NavCell><Sidebar /></NavCell>
      <NavCell><Wallet /></NavCell>
      <NavCell><Sparkle /></NavCell>
      <NavCell>
        <svg width="16" height="14" viewBox="0 0 16 14" stroke="#e4e3e8" strokeWidth="1.4"><path d="M0 1.5H16M0 7H16M0 12.5H16" /></svg>
      </NavCell>
    </NavRight>
  </NavBar>
);

const PdfToolbar = () => (
  <PdfBar>
    <PdfTitle>
      <svg width="14" height="10" viewBox="0 0 14 10" stroke="#f1f1f1" strokeWidth="1.5"><path d="M0 1H14M0 5H14M0 9H14" /></svg>
      test1_vulnerability_report.pdf
    </PdfTitle>
    <PdfControls>
      <Field $w={24}>4</Field>
      <PageTotal>/ 10</PageTotal>
      <Divider $h={20} $color="#777" />
      <ControlCell $w={40}>
        <svg width="11" height="2" viewBox="0 0 11 2"><rect width="11" height="1.7" fill="#e8e8e8" /></svg>
      </ControlCell>
      <Field $w={47}>100%</Field>
      <ControlCell $w={40}>
        <svg width="10" height="10" viewBox="0 0 10 10" stroke="#e8e8e8" strokeWidth="1.6"><path d="M5 0V10M0 5H10" /></svg>
      </ControlCell>
      <Divider $h={20} $color="#777" />
      <Spacer $w={12} />
      <ControlCell $w={32}><FitPage /></ControlCell>
      <ControlCell $w={32}><MdRotate90DegreesCcw size={18} color="#f1f1f1" /></ControlCell>
    </PdfControls>
    <PdfActions>
      <ControlCell $w={36}>
        <Stroke size={16} box={16} w={1.4} color="#e8e8e8"><path d="M8 .7V11M4.5 7.5 8 11 11.5 7.5M.8 11.5V14Q.8 15.2 2 15.2H14Q15.2 15.2 15.2 14V11.5" /></Stroke>
      </ControlCell>
      <ControlCell $w={36}><MdOutlinePrint size={19} color="#f1f1f1" /></ControlCell>
      <ControlCell $w={36}><MdMoreVert size={18} color="#f1f1f1" /></ControlCell>
    </PdfActions>
  </PdfBar>
);

const Report = () => (
  <Page>
    <Watermark>Nessus Essentials</Watermark>
    <Rule $h={2} />
    <Host>192.168.103.220</Host>
    <Tiles>
      {severities.map((s) => (
        <Tile key={s.label} $bg={s.bg}>{s.count}</Tile>
      ))}
      {severities.map((s) => (
        <TileLabel key={s.label}>{s.label}</TileLabel>
      ))}
    </Tiles>
    <Rule />
    <Caption>
      <span>Vulnerabilities</span>
      <span>Total: 132</span>
    </Caption>
    <Rule />
    <HeadRow>
      <span>SEVERITY</span>
      <span>CVSS<br />V3.0</span>
      <span>VPR SCORE</span>
      <span>EPSS SCORE</span>
      <span>PLUGIN</span>
      <span>NAME</span>
    </HeadRow>
    {rows.map(({ h, soft, low, up = 0, down = 0, ...r }) => (
      <Row key={r.plugin} $h={h} $soft={soft}>
        <Badge $level={r.level} $up={up} $low={low}>{r.level}</Badge>
        <Value $down={down}>{r.cvss}</Value>
        <Value $down={down}>{r.vpr}</Value>
        <Value $down={down}>{r.epss}</Value>
        <PluginLink $down={down}>{r.plugin}</PluginLink>
        <Name $up={up}>{r.name}</Name>
      </Row>
    ))}
  </Page>
);

export default function App() {
  return (
    <Screen>
      <Global />
      <DesktopPanel />
      <Tabs />
      <AddressRow />
      <PdfToolbar />
      <Viewer>
        <Canvas>
          <Report />
        </Canvas>
        <Scrollbar>
          <svg width="9" height="5" viewBox="0 0 9 5"><path d="M4.5 0 9 5H0z" fill="#8b8b8b" /></svg>
          <Thumb />
          <svg width="9" height="5" viewBox="0 0 9 5"><path d="M4.5 5 9 0H0z" fill="#505050" /></svg>
        </Scrollbar>
      </Viewer>
    </Screen>
  );
}
